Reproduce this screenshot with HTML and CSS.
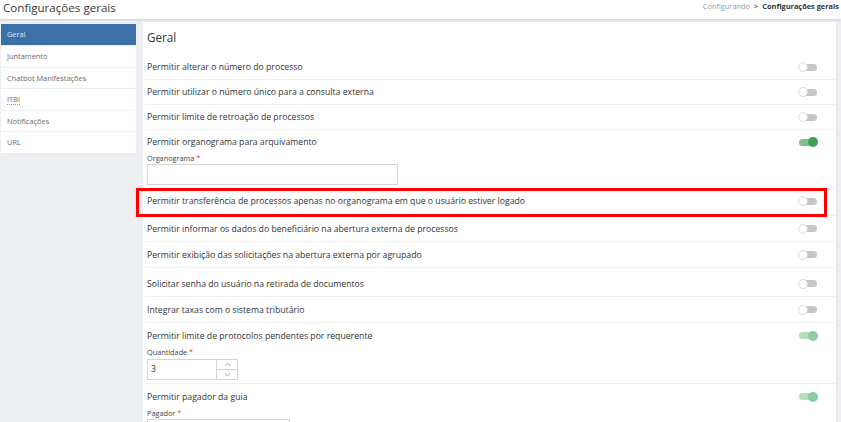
FILE: index.html
```html
<!DOCTYPE html>
<html lang="pt">
<head>
<meta charset="utf-8">
<link rel="stylesheet" href="styles.css">
</head>
<body>
<header class="topbar">
  <h1 class="page-title">Configurações gerais</h1>
  <nav class="crumbs"><span class="crumb-link">Configurando</span><span class="crumb-sep">&gt;</span><span class="crumb-cur">Configurações gerais</span></nav>
</header>
<div class="layout">
  <aside class="sidebar">
    <div class="nav-item active">Geral</div>
    <div class="nav-item">Juntamento</div>
    <div class="nav-item">Chatbot Manifestações</div>
    <div class="nav-item"><span class="dotted">ITBI</span></div>
    <div class="nav-item">Notificações</div>
    <div class="nav-item">URL</div>
  </aside>
  <main class="card">
    <h2 class="card-title">Geral</h2>
    <div class="row"><div class="row-main"><span>Permitir alterar o número do processo</span><span class="toggle"></span></div></div>
    <div class="row"><div class="row-main"><span>Permitir utilizar o número único para a consulta externa</span><span class="toggle"></span></div></div>
    <div class="row"><div class="row-main"><span>Permitir limite de retroação de processos</span><span class="toggle"></span></div></div>
    <div class="row with-field"><div class="row-main"><span>Permitir organograma para arquivamento</span><span class="toggle on"></span></div>
      <label class="field-label">Organograma <span class="req">*</span></label>
      <div class="text-input"></div>
    </div>
    <div class="row highlight"><div class="row-main"><span>Permitir transferência de processos apenas no organograma em que o usuário estiver logado</span><span class="toggle"></span></div></div>
    <div class="row wide"><div class="row-main"><span>Permitir informar os dados do beneficiário na abertura externa de processos</span><span class="toggle"></span></div></div>
    <div class="row wide"><div class="row-main"><span>Permitir exibição das solicitações na abertura externa por agrupado</span><span class="toggle"></span></div></div>
    <div class="row wide spaced"><div class="row-main"><span>Solicitar senha do usuário na retirada de documentos</span><span class="toggle"></span></div></div>
    <div class="row wide"><div class="row-main"><span>Integrar taxas com o sistema tributário</span><span class="toggle"></span></div></div>
    <div class="row wide with-field"><div class="row-main"><span>Permitir limite de protocolos pendentes por requerente</span><span class="toggle on dim"></span></div>
      <label class="field-label">Quantidade <span class="req">*</span></label>
      <div class="num-input"><span class="num-val">3</span><span class="spin"><span class="spin-btn"><svg width="7" height="5" viewBox="0 0 7 5"><path d="M1 3.5 L3.5 1.2 L6 3.5" fill="none" stroke="#8a8a8a" stroke-width="0.8"/></svg></span><span class="spin-btn"><svg width="7" height="5" viewBox="0 0 7 5"><path d="M1 1.5 L3.5 3.8 L6 1.5" fill="none" stroke="#8a8a8a" stroke-width="0.8"/></svg></span></span></div>
    </div>
    <div class="row wide with-field"><div class="row-main"><span>Permitir pagador da guia</span><span class="toggle on dim"></span></div>
      <label class="field-label">Pagador <span class="req">*</span></label>
      <div class="text-input short"></div>
    </div>
  </main>
</div>
</body>
</html>
```
FILE: styles.css
```css
* { box-sizing: border-box; }
html, body { margin: 0; padding: 0; }
body {
  background: #eceef2;
  font-family: "Open Sans", "Noto Sans", sans-serif;
  color: #333;
  width: 841px;
  height: 422px;
  overflow: hidden;
}
.topbar {
  height: 19px;
  background: #fff;
  display: flex;
  justify-content: space-between;
  align-items: flex-start;
  padding: 0 3px 0 3px;
  box-shadow: 0 1px 2px rgba(0,0,0,0.12);
  position: relative;
  z-index: 1;
}
.page-title {
  margin: 0;
  font-size: 11.6px;
  font-weight: 400;
  line-height: 16px;
  color: #3a3a3a;
}
.crumbs {
  font-size: 7.4px;
  line-height: 12px;
  display: flex;
  gap: 4px;
  margin-right: -1px;
}
.crumb-link { color: #999; }
.crumb-sep { color: #555; font-weight: 600; }
.crumb-cur { color: #333; font-weight: 700; }
.layout {
  display: flex;
  align-items: flex-start;
  padding: 3px 4px 0 1px;
  gap: 7px;
}
.sidebar {
  width: 135px;
  margin-top: 2px;
  display: flex;
  flex-direction: column;
  gap: 1px;
}
.nav-item {
  height: 20.5px;
  background: #fff;
  font-size: 7.4px;
  line-height: 20.5px;
  padding-left: 6px;
  color: #6a6a6a;
}
.nav-item.active {
  background: #3d6fa8;
  color: #dbe6f3;
  height: 21px;
}
.dotted { border-bottom: 1px dotted #999; line-height: 1; }
.card {
  flex: 1;
  background: #fff;
  border-right: 1px solid #e8e8e8;
  padding: 0 19px 0 4px;
  height: 410px;
}
.card-title {
  margin: 0;
  font-size: 11.7px;
  font-weight: 400;
  line-height: 16px;
  padding: 7px 0 10px 0;
  color: #333;
}
.row {
  border-bottom: 1px solid #f0f0f0;
  font-size: 8.7px;
  color: #333;
  position: relative;
  margin: 0 -18px 0 -2px;
  padding: 0 18px 0 2px;
}
.row-main {
  height: 24px;
  display: flex;
  align-items: center;
  justify-content: space-between;
}
.row.wide .row-main { height: 25px; }
.row.spaced { padding-top: 3px; }
.row.with-field { padding-bottom: 3px; }
.row.highlight { padding-bottom: 2px; }
.row.highlight::after {
  content: "";
  position: absolute;
  left: -9px;
  right: 8px;
  top: -1px;
  bottom: -2px;
  border: 3px solid #f00;
}
.field-label {
  display: block;
  font-size: 7.3px;
  line-height: 9px;
  color: #444;
}
.req { color: #e53935; }
.text-input {
  width: 251px;
  height: 21px;
  border: 1px solid #d4d4d4;
  margin-top: 1px;
}
.text-input.short { width: 143px; }
.num-input {
  width: 91px;
  height: 21px;
  border: 1px solid #d4d4d4;
  margin-top: 2px;
  display: flex;
  justify-content: space-between;
}
.num-val { font-size: 8.6px; line-height: 19px; padding-left: 3px; }
.spin {
  width: 21px;
  border-left: 1px solid #d4d4d4;
  display: flex;
  flex-direction: column;
}
.spin-btn {
  flex: 1;
  display: flex;
  align-items: center;
  justify-content: center;
}
.spin-btn + .spin-btn { border-top: 1px solid #d4d4d4; }
.toggle {
  position: relative;
  width: 18px;
  height: 7px;
  border-radius: 4px;
  background: #c6c6c6;
  flex: none;
}
.toggle::before {
  content: "";
  position: absolute;
  left: -1px;
  top: -1.5px;
  width: 10px;
  height: 10px;
  border-radius: 50%;
  background: #fff;
  border: 1px solid #dcdcdc;
  box-sizing: border-box;
}
.toggle.on { background: #7fc08e; }
.toggle.on::before {
  left: auto;
  right: -1px;
  background: #3e9e54;
  border: none;
}
.toggle.on.dim { background: #b4dcbf; }
.toggle.on.dim::before { background: #8fcba0; }
```
